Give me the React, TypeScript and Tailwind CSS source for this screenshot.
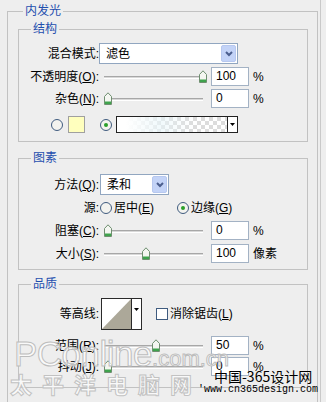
import React from 'react';

const Key: React.FC<{ k: string }> = ({ k }) => (
  <>
    (<span className="underline underline-offset-[1px]">{k}</span>)
  </>
);

const Thumb = () => (
  <svg width="8" height="13" viewBox="0 0 8 13">
    <polygon points="0.5,4.5 4,0.8 7.5,4.5 7.5,12.5 0.5,12.5" fill="#f4f6f1" stroke="#6f8f70" />
    <rect x="1" y="9.5" width="6" height="2.5" fill="#3fa34d" />
  </svg>
);

const Slider: React.FC<{ value: number; max: number }> = ({ value, max }) => (
  <div className="relative h-[19px] w-[104px] shrink-0">
    <div className="absolute left-0 top-[9px] h-[3px] w-[99px] border-t border-b border-t-[#a7a7a7] border-b-white bg-[#d8d8d8]" />
    <div className="absolute top-[3px]" style={{ left: Math.round((value / max) * 95) }}>
      <Thumb />
    </div>
  </div>
);

const Field: React.FC<{ value: string }> = ({ value }) => (
  <div className="ml-[3px] h-[19px] w-[38px] shrink-0 border border-[#a3b2c4] bg-white pl-[4px] text-[12px] leading-[17px]">
    {value}
  </div>
);

const Arrow = () => (
  <span className="mr-[1px] flex h-[17px] w-[15px] items-center justify-center rounded-[2px] border border-[#b7c8ef] bg-[#c3d3f7]">
    <svg width="8" height="6" viewBox="0 0 8 6">
      <path d="M1 1 L4 4 L7 1" fill="none" stroke="#4b5e8e" strokeWidth="2" />
    </svg>
  </span>
);

const Radio: React.FC<{ on?: boolean }> = ({ on }) => (
  <span className="flex h-[12px] w-[12px] shrink-0 items-center justify-center rounded-full border border-[#3f5b7f] bg-[#f3f3ef]">
    {on && <span className="h-[4px] w-[4px] rounded-full bg-[#2aa02a]" />}
  </span>
);

const Label: React.FC<{ children: React.ReactNode }> = ({ children }) => (
  <div className="w-[80px] shrink-0 text-right">{children}</div>
);

const SliderRow: React.FC<{
  label: React.ReactNode;
  value: number;
  max: number;
  unit: string;
  className?: string;
}> = ({ label, value, max, unit, className }) => (
  <div className={`flex h-[19px] items-center ${className ?? ''}`}>
    <Label>{label}</Label>
    <div className="ml-[5px]">
      <Slider value={value} max={max} />
    </div>
    <Field value={String(value)} />
    <span className="ml-[4px]">{unit}</span>
  </div>
);

const Group: React.FC<{ title: string; className?: string; children: React.ReactNode }> = ({
  title,
  className,
  children,
}) => (
  <div className={`w-[290px] border border-[#c2c2c2] ${className ?? ''}`}>
    {/* title sits on the top border line */}
    <div className="-mt-[8px] flex h-[14px] items-start">
      <span className="h-[1px] w-[12px] shrink-0" />
      <span className="shrink-0 bg-[#eeeeee] px-[2px] leading-[14px] text-[#1f4fae]">{title}</span>
    </div>
    {children}
  </div>
);

export default function App() {
  return (
    <div className="relative h-[402px] w-[326px] overflow-hidden bg-[#eeeeee] font-['Liberation_Sans','Noto_Sans_CJK_SC',sans-serif] text-[12px] leading-[14px] text-black">
      <div className="h-full w-[321px] border-r border-[#c9c9c9] pl-[7px] pt-[11px]">
        <div className="w-[311px] border border-[#c2c2c2] pb-[30px] pl-[10px] pr-[9px]">
          <div className="-mt-[8px] flex h-[14px] items-start">
            <span className="h-[1px] w-[5px] shrink-0" />
            <span className="shrink-0 bg-[#eeeeee] px-[2px] leading-[14px] text-[#1f4fae]">内发光</span>
          </div>

          <Group title="结构" className="mt-[11px] pb-[8px]">
            <div className="mt-[7px] flex h-[21px] items-center">
              <Label>混合模式:</Label>
              <div className="flex h-[21px] w-[139px] items-center border border-[#91a6c0] bg-white pl-[6px]">
                <span className="flex-1">滤色</span>
                <Arrow />
              </div>
            </div>
            <SliderRow className="mt-[3px]" label={<>不透明度<Key k="O" />:</>} value={100} max={100} unit="%" />
            <SliderRow className="mt-[3px]" label={<>杂色<Key k="N" />:</>} value={0} max={100} unit="%" />
            <div className="mt-[8px] flex h-[17px] items-center pl-[32px]">
              <Radio />
              <span className="ml-[5px] h-[17px] w-[17px] border border-[#a0a0a0] bg-[#ffffbe]" />
              <span className="ml-[15px]">
                <Radio on />
              </span>
              <div className="ml-[4px] flex h-[17px] w-[122px] border border-[#222]">
                <div className="flex-1 bg-[linear-gradient(to_right,#ffffff_8%,rgba(232,246,250,0.6)_40%,rgba(255,255,255,0)_70%),repeating-conic-gradient(#dcdcdc_0_25%,#ffffff_0_50%)] [background-size:100%_100%,8px_8px]" />
                <div className="flex w-[10px] items-center justify-center border-l border-[#222] bg-white">
                  <svg width="5" height="3" viewBox="0 0 5 3">
                    <polygon points="0,0 5,0 2.5,3" fill="#000" />
                  </svg>
                </div>
              </div>
            </div>
          </Group>

          <Group title="图素" className="mt-[16px] pb-[6px]">
            <div className="mt-[9px] flex h-[21px] items-center">
              <Label>方法<Key k="Q" />:</Label>
              <div className="ml-[1px] flex h-[21px] w-[69px] items-center border border-[#91a6c0] bg-white pl-[6px]">
                <span className="flex-1">柔和</span>
                <Arrow />
              </div>
            </div>
            <div className="mt-[4px] flex h-[18px] items-center">
              <Label>源:</Label>
              <span className="ml-[1px]">
                <Radio />
              </span>
              <span className="ml-[2px] w-[63px]">居中<Key k="E" /></span>
              <Radio on />
              <span className="ml-[2px]">边缘<Key k="G" /></span>
            </div>
            <SliderRow className="mt-[4px]" label={<>阻塞<Key k="C" />:</>} value={0} max={100} unit="%" />
            <SliderRow className="mt-[4px]" label={<>大小<Key k="S" />:</>} value={100} max={250} unit="像素" />
          </Group>

          <Group title="品质" className="mt-[14px] pb-[11px]">
            <div className="mt-[7px] flex h-[32px] items-center">
              <Label>等高线:</Label>
              <div className="ml-[2px] flex h-[32px] w-[41px] border border-[#2a2a2a] bg-white">
                <svg width="29" height="30" viewBox="0 0 29 30">
                  <rect width="29" height="30" fill="#ffffff" />
                  <polygon points="0,30 29,0 29,30" fill="#aca899" />
                </svg>
                <div className="flex flex-1 items-start justify-center border-l border-[#2a2a2a] pt-[9px]">
                  <svg width="5" height="3" viewBox="0 0 5 3">
                    <polygon points="0,0 5,0 2.5,3" fill="#000" />
                  </svg>
                </div>
              </div>
              <span className="ml-[14px] h-[12px] w-[12px] border border-[#3f5b7f] bg-white" />
              <span className="ml-[2px]">消除锯齿<Key k="L" /></span>
            </div>
            <SliderRow className="mt-[6px]" label={<>范围<Key k="R" />:</>} value={50} max={100} unit="%" />
            <SliderRow className="mt-[2px]" label={<>抖动<Key k="J" />:</>} value={0} max={100} unit="%" />
          </Group>
        </div>
      </div>

      {/* watermarks */}
      <div className="pointer-events-none absolute left-[14px] top-[336px] flex items-baseline text-white/70 [-webkit-text-stroke:1px_#bdbdbd]">
        <span className="font-['Liberation_Sans',sans-serif] text-[35px] leading-[36px] tracking-[-0.5px]">PConline</span>
        <span className="font-['Liberation_Sans',sans-serif] text-[22px] leading-[22px]">.com.cn</span>
      </div>
      <div className="pointer-events-none absolute left-[10px] top-[371px] flex gap-[10px] font-['Noto_Sans_CJK_SC',sans-serif] text-[22px] font-bold leading-[24px] text-white/70 [-webkit-text-stroke:1px_#c2c2c2]">
        <span>太</span>
        <span>平</span>
        <span>洋</span>
        <span>电</span>
        <span>脑</span>
        <span>网</span>
      </div>
      <div className="pointer-events-none absolute left-[214px] top-[367px] font-['Noto_Sans_CJK_SC',sans-serif] text-[14px] leading-[18px] text-black">
        中国-365设计网
      </div>
      <div className="pointer-events-none absolute left-[198px] top-[384px] font-['Liberation_Mono',monospace] text-[10px] leading-[12px] text-black">
        'www.cn365design.com
      </div>
    </div>
  );
}
